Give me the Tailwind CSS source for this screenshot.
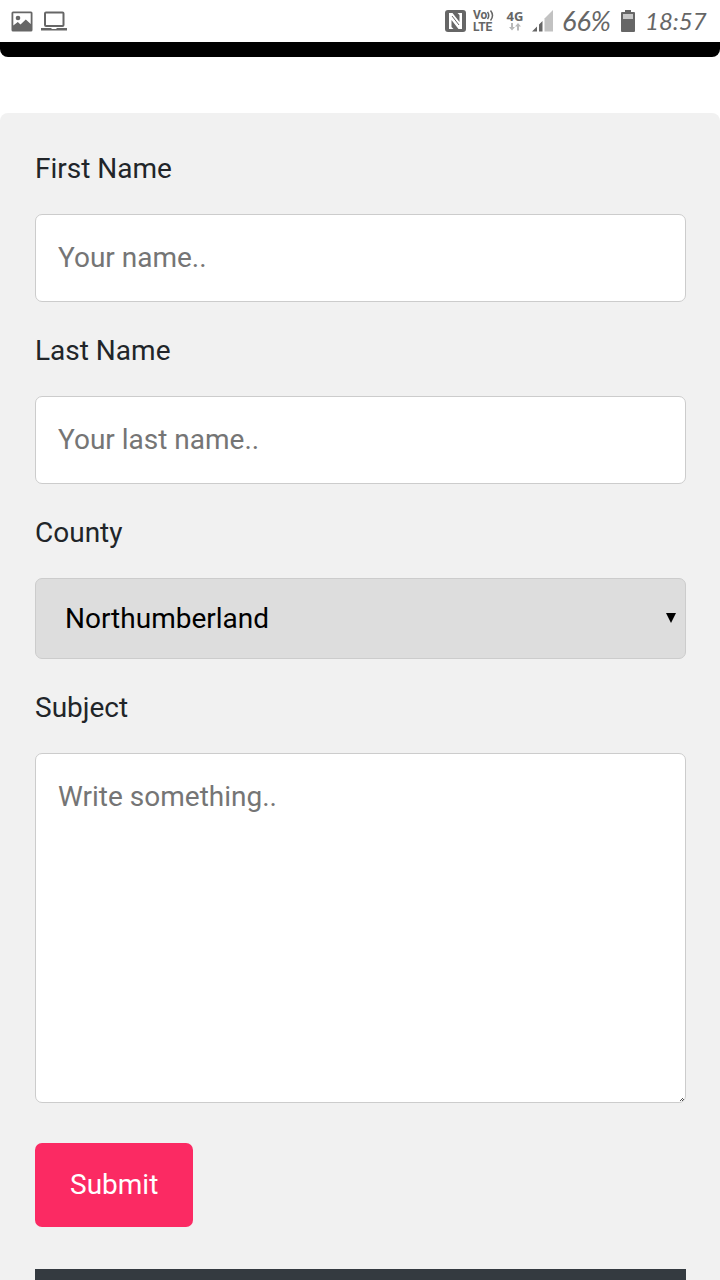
<!DOCTYPE html>
<html lang="en">
<head>
<meta charset="utf-8">
<meta name="viewport" content="width=device-width, initial-scale=1">
<title>Contact form</title>
<script src="https://cdn.jsdelivr.net/npm/@tailwindcss/browser@4"></script>
</head>
<body class="flex min-h-screen flex-col bg-white font-['Roboto',sans-serif] text-[28px] leading-[42px] text-[#212529]">
<header class="flex h-[42px] shrink-0 items-center justify-between pl-[11px] pr-[13px] text-[#666666]">
  <div class="flex items-center gap-2">
    <svg class="h-[21px] w-[22px]" viewBox="0 0 22 21" aria-hidden="true">
      <path fill="currentColor" fill-rule="evenodd" d="M2 0.5H20Q21.5 .5 21.5 2V19Q21.5 20.5 20 20.5H2Q.5 20.5 .5 19V2Q.5 .5 2 .5ZM2.3 2.3V14.5L6.8 11L9.5 13.5L14.8 8.5L19.7 13V2.3Z"/>
      <circle cx="7" cy="7" r="2.3" fill="currentColor"/>
    </svg>
    <svg class="h-[21px] w-[26px]" viewBox="0 0 26 21" aria-hidden="true">
      <rect x="4" y="1.5" width="18.5" height="13.5" rx="1" fill="none" stroke="currentColor" stroke-width="2"/>
      <path fill="currentColor" d="M0 17H10L11 18H15L16 17H26V19.5H0Z"/>
    </svg>
  </div>
  <div class="flex items-center">
    <svg class="mr-[7px] h-[22px] w-[21px]" viewBox="0 0 21 22" aria-hidden="true">
      <rect width="21" height="22" rx="3" fill="currentColor"/>
      <path fill="#fff" d="M4 3H7.5L14.5 12V5L12.5 3H17V19H13.5L6.5 10V17L8.5 19H4Z"/>
      <path fill="none" stroke="currentColor" stroke-width="1" d="M7 6L14 15"/>
    </svg>
    <div class="mr-3 flex w-[21px] flex-col text-[12px] font-bold leading-[12px] font-['Roboto',sans-serif]">
      <span class="flex h-[11px] items-center">Vo<svg class="h-[11px] w-[7px] shrink-0" viewBox="0 0 7 11" fill="none" stroke="currentColor" stroke-width="1.5" aria-hidden="true"><path d="M.5 2Q3 5.5 .5 9M3.5 .5Q7.500 5.500 3.500 10.500"/></svg></span>
      <span>LTE</span>
    </div>
    <div class="mr-2 flex w-[18px] flex-col items-center text-[13px] font-bold leading-[14px] font-['Open_Sans',sans-serif]">
      <span>4G</span>
      <svg class="mb-[2px] h-[8px] w-[12px]" viewBox="0 0 12 8" fill="#b8b8b8" aria-hidden="true"><path d="M2 0H4V4H6L3 7.5L0 4H2ZM8 7.5H10V3.500H12L9 0L6 3.500H8Z"/></svg>
    </div>
    <svg class="mr-[9px] h-[22px] w-[21px]" viewBox="0 0 21 22" aria-hidden="true">
      <path fill="#c2c2c2" d="M12.500 8.500L21 0V21.500H12.500Z"/>
      <path fill="currentColor" d="M0 21.500L5 16.500V21.500ZM7 14.500L10.500 11V21.500H7Z"/>
    </svg>
    <span class="w-[50px] whitespace-nowrap text-[27px] italic leading-[42px] font-['Lato',sans-serif]">66%</span>
    <svg class="ml-[9px] mr-[10px] h-[22px] w-[14px]" viewBox="0 0 14 22" aria-hidden="true">
      <path fill="currentColor" d="M4 0H10V2H13Q14 2 14 3V21Q14 22 13 22H1Q0 22 0 21V3Q0 2 1 2H4Z"/>
      <rect x="2" y="4" width="10" height="5" fill="#c7c7c7"/>
    </svg>
    <span class="w-[62px] whitespace-nowrap text-[24px] italic leading-[42px] font-['Lato',sans-serif]">18:57</span>
  </div>
</header>
<div class="h-[15px] shrink-0 rounded-b-lg bg-black"></div>
<main class="mt-14 flex grow flex-col rounded-t-lg bg-[#f1f1f1] pl-[35px] pr-[34px] pt-[35px]">
  <form class="flex flex-col gap-7">
    <div class="flex flex-col gap-6">
      <label for="first">First Name</label>
      <input id="first" type="text" placeholder="Your name.." class="h-[88px] w-full rounded-[7px] border border-[#cccccc] bg-white px-[22px] pb-[2px] placeholder:text-[#757575]">
    </div>
    <div class="flex flex-col gap-6">
      <label for="last">Last Name</label>
      <input id="last" type="text" placeholder="Your last name.." class="h-[88px] w-full rounded-[7px] border border-[#cccccc] bg-white px-[22px] pb-[2px] placeholder:text-[#757575]">
    </div>
    <div class="flex flex-col gap-6">
      <label for="county">County</label>
      <div class="relative">
        <select id="county" class="block h-[81px] w-full appearance-none rounded-[7px] border border-[#cccccc] bg-[#dddddd] pl-[29px] pr-10 text-black"><option>Northumberland</option></select>
        <svg class="pointer-events-none absolute right-[10px] top-[35px] h-[10px] w-[10px]" viewBox="0 0 10 10" aria-hidden="true"><path d="M0 0H10L5 10Z"/></svg>
      </div>
    </div>
    <div class="flex flex-col gap-6">
      <label for="subject">Subject</label>
      <div class="relative">
        <textarea id="subject" placeholder="Write something.." class="block h-[350px] w-full resize-none rounded-[7px] border border-[#cccccc] bg-white p-[22px] placeholder:text-[#757575]"></textarea>
        <svg class="pointer-events-none absolute bottom-[2px] right-[2px] h-[4px] w-[4px]" viewBox="0 0 4 4" fill="#555" aria-hidden="true"><path d="M0 3h1v1H0zM1 2h1v1H1zM2 1h1v1H2zM2 3h1v1H2zM3 2h1v1H3z"/></svg>
      </div>
    </div>
    <button type="submit" class="mt-3 h-[84px] self-start rounded-[7px] bg-[#fb2a63] px-[35px] text-white">Submit</button>
  </form>
  <footer class="mt-[42px] min-h-[11px] grow bg-[#343a40]"></footer>
</main>
</body>
</html>
